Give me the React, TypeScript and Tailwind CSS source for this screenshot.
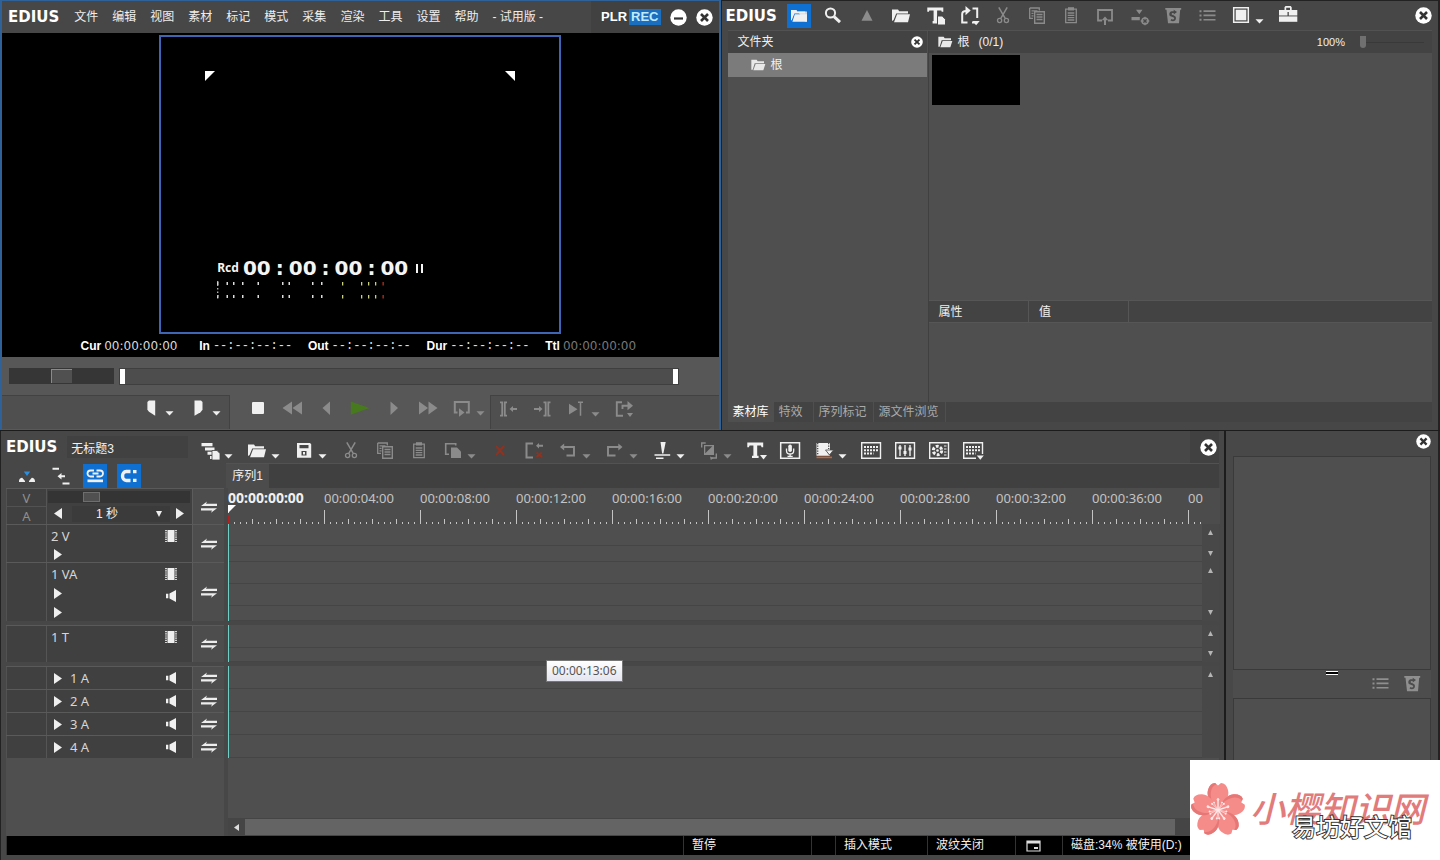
import React from "react";
import type { ReactNode } from "react";

type IconProps = { children: ReactNode; className?: string };

function Icon({ children, className = "" }: IconProps) {
  return (
    <svg viewBox="0 0 24 24" width="24" height="24" fill="currentColor" aria-hidden="true" className={`shrink-0 ${className}`}>
      {children}
    </svg>
  );
}

const line = { fill: "none", stroke: "currentColor" };

const icons = {
  folder: (
    <Icon>
      <path d="M3 5.5h6l1.2 1.8H19v2.2H7.2L4.6 16 3 17z" />
      <path d="M8 10.3h13l-2 7.9H5z" />
    </Icon>
  ),
  folderActive: (
    <Icon>
      <path d="M4 6h5.4l1.2 1.6h7.6v2H7.4L4.8 16 4 16.5z" />
      <path d="M7.8 10.2H20v7.6H5.4z" />
      <path d="M10.8 7.6H20v10H18z" opacity="0.8" />
    </Icon>
  ),
  search: (
    <Icon>
      <circle cx="9.5" cy="9" r="4.6" {...line} strokeWidth="2" />
      <path d="M13 12.6l6 5.6" {...line} strokeWidth="3" />
    </Icon>
  ),
  up: <Icon><path d="M12 6l5.5 10.7h-11z" /></Icon>,
  titleDoc: (
    <Icon>
      <path d="M4.3 3.6h16v4.2h-1.600l-.4-1.400h-4.200V17h1v2.500H9.600V17h1V6.400H6.300l-.4 1.400H4.300z" />
      <path d="M14.5 12h4.7l3.3 3.3V21h-8z" stroke="#484848" strokeWidth="1" />
    </Icon>
  ),
  loopSeq: (
    <Icon>
      <path d="M10.5 18.5H5.2V12M5.2 14V10c0-2 1.5-3 4-3M15.5 4.5h4.7V14M20.2 18.5H15" {...line} strokeWidth="2" />
      <path d="M8.5 2l5.2 4.6-5.2 4.6zM15.5 17h7.2l-3.6 4.3z" />
    </Icon>
  ),
  cut: (
    <Icon>
      <path d="M7.8 3.3l6.4 11M16.2 3.3l-6.4 11" {...line} strokeWidth="1.5" />
      <circle cx="8.600" cy="16.5" r="2.1" {...line} strokeWidth="1.3" />
      <circle cx="15.4" cy="16.5" r="2.1" {...line} strokeWidth="1.3" />
    </Icon>
  ),
  copy: (
    <Icon>
      <path d="M4.7 4h9.600v2.5M8 14.3H4.700V4M6.500 6.800h6M6.500 9.300h2M6.500 11.800h2" {...line} strokeWidth="1.3" />
      <path d="M9.700 7.700h9.600v11.600H9.700zM11.500 10.500h6M11.500 13h6M11.500 15.500h6" {...line} strokeWidth="1.4" />
    </Icon>
  ),
  paste: (
    <Icon>
      <path d="M6.700 5.200h10.600v13.500H6.700zM8.700 9h6.600M8.700 11.300h6.600M8.700 13.600h6.600M8.700 16h6.600" {...line} strokeWidth="1.3" />
      <path d="M9 3.200h6v3.300H9z" />
    </Icon>
  ),
  toMonitor: (
    <Icon>
      <path d="M9 16.500H5V6h14v10.500h-4" {...line} strokeWidth="1.8" />
      <path d="M12 12.500l3.300 3.800h-2.300V21h-2v-4.700H8.700z" />
    </Icon>
  ),
  addLine: (
    <Icon>
      <path d="M9 5.800h6.500l-3.200 4.400zM4.500 13h8.300v3.200H4.500z" />
      <circle cx="18" cy="17" r="3" {...line} strokeWidth="1.5" />
      <path d="M18 12.700v3M18 18.300v3M13.700 17h3M19.300 17h3" {...line} strokeWidth="1.3" />
    </Icon>
  ),
  recycle: (
    <Icon>
      <path fillRule="evenodd" d="M4.300 4h15.900v1.700h-1L18 19.200H7L5.500 5.700H4.300zM9.800 7.500c-1.500.6-2 3.300-.9 4.600l3.800 1.500c.8.500.6 2-.6 2-1 0-1.500-.6-1.500-.6l-1.200 1.300c2.300 2 6.200.6 5.500-2.800-.3-1.500-1.500-2-3.800-2.800-.8-.4-.6-1.700.6-1.700h1v1.500l3.300-2.500-3.300-2.300v1.500c-.9-.1-2.100-.1-2.900.3z" />
    </Icon>
  ),
  list: (
    <Icon>
      <path d="M4.500 6.200h2v2h-2zM4.500 10.500h2v2h-2zM4.500 14.800h2v2h-2zM8.500 6.300h12v1.700h-12zM8.500 10.600h12v1.700h-12zM8.500 14.900h12v1.700h-12z" />
    </Icon>
  ),
  square: (
    <Icon>
      <path d="M4.700 3.700h14.600v14.600H4.700z" {...line} strokeWidth="1.5" />
      <path d="M6.700 5.700h10.600v10.600H6.700z" />
    </Icon>
  ),
  briefcase: (
    <Icon>
      <path fillRule="evenodd" d="M3 6h5.500V3.200L9.500 2h5.200l1 1.200V6h5.600v5.500H3zM10.200 3.700V6h3.800V3.700z" />
      <path d="M3 12.400h18.300v5.400H3z" />
      <path d="M11.500 8h1.300v4h-1.300z" fill="#474747" />
    </Icon>
  ),
  layers: (
    <Icon>
      <path d="M3.500 4h11v3.300h-11zM7 8.500h9.500v3H7zM9.500 12.800h5v3h-5zM12 17h2v3h-2z" />
      <path d="M14 11.500h5l3 3V21h-8z" stroke="#474747" strokeWidth="0.8" />
    </Icon>
  ),
  save: (
    <Icon>
      <path fillRule="evenodd" d="M5 4h13l1.200 1.200v13.500H5zM7.500 6v3.200h9V6zM9.500 12v4.500h5V12z" />
      <path d="M11 13h2v2.500h-2z" />
    </Icon>
  ),
  pasteTo: (
    <Icon>
      <path d="M8 15.300H4.700V4.700h10V6.500" {...line} strokeWidth="1.6" />
      <path d="M10 8.500h6l4 4V19H10z" />
    </Icon>
  ),
  remove: <Icon className="text-[#90321f]"><path d="M8 7l8 9M16 7l-8 9" {...line} strokeWidth="2" /></Icon>,
  rippleDelete: (
    <Icon>
      <path d="M11 4.500H4.500v14H11M15.500 6.800h5.500" {...line} strokeWidth="2" />
      <path d="M14 6.800l3-2.800v5.600z" />
      <path d="M14.500 13.500l5.500 4.500M20 13.500l-5.500 4.500" stroke="#90321f" strokeWidth="2" />
    </Icon>
  ),
  undo: (
    <Icon>
      <path d="M7 8h11v8.500h-7.500" {...line} strokeWidth="1.9" />
      <path d="M4 8l4.200-3.500v7z" />
    </Icon>
  ),
  redo: (
    <Icon>
      <path d="M16 8H5v8.500h7.500" {...line} strokeWidth="1.9" />
      <path d="M19.500 8l-4.200-3.500v7z" />
    </Icon>
  ),
  razor: (
    <Icon>
      <path d="M10.500 3h5.200l-2.300 11.500h-1.300zM4.500 15.300h15.700v1.500H4.500zM6 18.600h7.500V20H6z" />
    </Icon>
  ),
  transition: (
    <Icon>
      <path fillRule="evenodd" d="M7 6h10v10H7zM8.300 7.300v7l7-7z" />
      <path d="M4.700 8.500V4h4M19.300 14.500v4.500h-4.500" {...line} strokeWidth="1.4" />
      <path d="M13 17.500l3.800 1.500-3 2z" />
    </Icon>
  ),
  title: (
    <Icon>
      <path d="M3.300 3.600h15.900v4.600h-1.600l-.7-1.600h-3.700v10.100h1.400v2.200H8v-2.200h1.400V6.600H5.600l-.7 1.600H3.300z" />
      <path d="M16 16h7l-3.500 4.500z" />
    </Icon>
  ),
  mic: (
    <Icon>
      <path d="M2.700 3.700h18.800v15.600H2.700z" {...line} strokeWidth="1.5" />
      <rect x="10.3" y="5.5" width="3.6" height="7.5" rx="1.8" />
      <path d="M8.500 9.500v2.200c0 4.300 7.200 4.300 7.200 0V9.500M12.100 15v2.500M9.500 17.300h5.200" {...line} strokeWidth="1.3" />
    </Icon>
  ),
  render: (
    <Icon>
      <path d="M4.500 4h13.500v9H15l3 3.700H4.500z" />
      <path d="M5.700 4v12.500M16.700 4v6" stroke="#474747" strokeWidth="1.3" strokeDasharray="1.3 1.2" />
      <path d="M13.500 11h8l-4 5z" stroke="#474747" strokeWidth="0.8" />
      <path d="M4.500 17.600h15.500v1.600H4.500z" fill="#d0602d" />
    </Icon>
  ),
  keypad: (
    <Icon>
      <path d="M2.700 3.700h18.800v15.600H2.700z" {...line} strokeWidth="1.4" />
      <path d="M5 8h14M5 11.300h14M5 14.600h9.500" {...line} strokeWidth="2" strokeDasharray="2 1" />
    </Icon>
  ),
  mixer: (
    <Icon>
      <path d="M2.700 3.700h18.800v15.600H2.700zM7 6v11M12 6v11M17 6v11" {...line} strokeWidth="1.4" />
      <path d="M5.500 7.500h3v3h-3zM10.500 12h3v3h-3zM15.500 8.500h3v3h-3z" />
    </Icon>
  ),
  scope: (
    <Icon>
      <path d="M2.700 3.700h18.800v15.600H2.700z" {...line} strokeWidth="1.4" />
      <circle cx="10.5" cy="11.5" r="4.2" {...line} strokeWidth="3" strokeDasharray="2.8 1.6" />
      <circle cx="10.5" cy="11.5" r="1.3" />
      <path d="M17 7h2.500M17 10h2.500M17 13h2.500M17 16h2.500" {...line} strokeWidth="1.2" />
    </Icon>
  ),
  keypadMenu: (
    <Icon>
      <path d="M15 19.300H2.700V3.700h18.800V15" {...line} strokeWidth="1.4" />
      <path d="M5 8h14M5 11.300h14M5 14.600h9.500" {...line} strokeWidth="2" strokeDasharray="2 1" />
      <path d="M15.800 16.500h7l-3.500 4.200z" />
    </Icon>
  ),
  markIn: <Icon><path d="M10 4.500h6.200v15.200l-6.200-4-1.600-2V6z" /></Icon>,
  markOut: <Icon><path d="M8.500 4.500H15L16.500 6v7.700l-2 2.500-6 3.500z" /></Icon>,
  stop: <Icon><rect x="6" y="6" width="12" height="12" rx="1" /></Icon>,
  rewind: <Icon><path d="M12 5.500v13L2.500 12zM22 5.500v13L12.500 12z" /></Icon>,
  prev: <Icon><path d="M16 5.500v13.500L8.500 12z" /></Icon>,
  play: <Icon className="text-[#467a1c]"><path d="M2.800 5.500L21.500 12 2.800 18.800z" /></Icon>,
  next: <Icon><path d="M8.500 5.500v13.500L16 12z" /></Icon>,
  forward: <Icon><path d="M3 5.500v13l9-6.500zM12.500 5.500v13l9-6.500z" /></Icon>,
  loop: (
    <Icon>
      <path d="M7.500 16.500H4.800V6h14v10.500H16" {...line} strokeWidth="2" />
      <path d="M9 12.300l5.500 4.200L9 20.800z" />
    </Icon>
  ),
  gotoIn: (
    <Icon>
      <path d="M3 5.300h2.200v13.400H3M10 5.300H7.800v13.400H10M15 12h5" {...line} strokeWidth="1.8" />
      <path d="M12.500 12l3.500-3v6z" />
    </Icon>
  ),
  gotoOut: (
    <Icon>
      <path d="M12.500 5.300h2.200v13.400h-2.200M19.500 5.300h-2.200v13.400h2.200M3 12h6" {...line} strokeWidth="1.8" />
      <path d="M11.500 12L8 9v6z" />
    </Icon>
  ),
  playAround: (
    <Icon>
      <path d="M4 6.800l8.500 5.400L4 17.600z" />
      <path d="M13 5.300h5M15.500 5.300v13.400" {...line} strokeWidth="1.5" />
    </Icon>
  ),
  exportOut: (
    <Icon>
      <path d="M10 5.300H4.800v13.400H11M10.500 12V8.800H17" {...line} strokeWidth="1.9" />
      <path d="M15.500 4l5.500 4.700-5.500 4.500zM15 16h6l-3 4z" />
    </Icon>
  ),
  ripple: (
    <Icon>
      <path d="M8.800 7.500h6.400L12 12z" className="text-[#2b8fe0]" />
      <path d="M4 17.500c0-3 2-3.800 3.200-3.800L10 17v1H4zM14 18v-1l2.800-3.300c1.200 0 3.200.8 3.200 3.800v.5z" />
    </Icon>
  ),
  insertMode: (
    <Icon>
      <path d="M3.500 4.800h6.500M13.500 19.500h7M11 12.300h5" {...line} strokeWidth="2" />
      <path d="M8.500 12.300l4-3.300v6.600z" />
    </Icon>
  ),
  link: (
    <Icon>
      <path d="M11 6.500H7.500a2 2 0 000 6H11M13.500 6.500H17a2 2 0 010 6h-3.500M9.500 9.500h6" {...line} strokeWidth="1.8" />
      <path d="M4.500 15.500h15.500v2.700H4.500z" />
    </Icon>
  ),
  snap: (
    <Icon>
      <path d="M13.500 7.500H9.300c-5 0-5 9 0 9h4.200" {...line} strokeWidth="3.4" />
      <path d="M16 6h3.500v3.300H16zM16 14.700h3.500V18H16z" />
    </Icon>
  ),
};

const Caret = ({ bright }: { bright?: boolean }) => (
  <svg viewBox="0 0 13 24" width="13" height="24" aria-hidden="true" className={bright ? "text-[#f0f0f0]" : "text-[#8b8b8b]"}>
    <path d="M2.5 15.200h8L6.500 19.500z" fill="currentColor" />
  </svg>
);

type Tool = { icon: keyof typeof icons; label: string; off?: boolean; menu?: boolean; active?: boolean };

function ToolButton({ icon, label, off, menu, active }: Tool) {
  return (
    <div className="flex shrink-0">
      <button
        aria-label={label}
        className={`size-6 ${active ? "bg-[#0f70d2]" : ""} ${off ? "text-[#8b8b8b]" : "text-[#f0f0f0]"}`}
      >
        {icons[icon]}
      </button>
      {menu && (
        <button aria-label={`${label}菜单`}>
          <Caret bright={!off} />
        </button>
      )}
    </div>
  );
}

function Toolbar({ tools }: { tools: Tool[] }) {
  return (
    <div className="flex items-center gap-2.5">
      {tools.map((t) => (
        <ToolButton key={t.label} {...t} />
      ))}
    </div>
  );
}

function CloseButton({ small }: { small?: boolean }) {
  const s = small ? 12 : 17;
  return (
    <button aria-label="关闭" className="shrink-0">
      <svg viewBox="0 0 17 17" width={s} height={s} aria-hidden="true" className="block">
        <circle cx="8.5" cy="8.5" r="8.2" fill="#fff" />
        <path d="M5 5l7 7M12 5l-7 7" stroke="#333" strokeWidth="2.6" />
      </svg>
    </button>
  );
}

const Logo = () => <span className="font-[DejaVu_Sans] text-[15px] leading-4 font-bold text-white">EDIUS</span>;

/* ---------- Player / recorder ---------- */

const menus = ["文件", "编辑", "视图", "素材", "标记", "模式", "采集", "渲染", "工具", "设置", "帮助"];

const readouts: [string, string, string][] = [
  ["Cur", "00:00:00:00", "text-[#d8d8d8]"],
  ["In", "--:--:--:--", "text-[#e0e0e0]"],
  ["Out", "--:--:--:--", "text-[#e0e0e0]"],
  ["Dur", "--:--:--:--", "text-[#e0e0e0]"],
  ["Ttl", "00:00:00:00", "text-[#777]"],
];

function LevelMeter() {
  const white = [0, 9.5, 16, 25, 40.5, 65, 71.5, 95, 104];
  const yellow = [125, 144, 151, 158];
  return (
    <svg width="170" height="20" viewBox="0 0 170 20" aria-hidden="true">
      {[2, 15].map((y) => (
        <g key={y}>
          {white.map((x) => (
            <rect key={x} x={x} y={y} width="1.5" height="3" fill="#ddd" />
          ))}
          {yellow.map((x) => (
            <rect key={x} x={x} y={y} width="1.3" height="3.5" fill="#c9cf7a" />
          ))}
          <rect x="165.5" y={y} width="1.3" height="3.5" fill="#b5301c" />
        </g>
      ))}
      <path d="M.7 1v18" stroke="#bbb" strokeWidth="1.3" strokeDasharray="1.5 2" />
    </svg>
  );
}

function Player() {
  return (
    <section className="flex flex-1 flex-col border-x-2 border-y border-[#2f6299] bg-[#575757]">
      <header className="flex h-8 items-center bg-[#474747] pl-1.5">
        <Logo />
        <nav className="ml-[15px] flex flex-1 gap-3.5 text-xs whitespace-nowrap text-[#eee]">
          {menus.map((m) => (
            <button key={m}>{m}</button>
          ))}
          <span>- 试用版 -</span>
        </nav>
        <div className="flex h-full items-center gap-[9px] bg-[#414141] pr-1.5 pl-2.5">
          <div className="flex gap-0.5 font-[Liberation_Sans] text-[13px] leading-4 font-bold">
            <button className="text-white">PLR</button>
            <button className="bg-[#1a6fc0] px-0.5 text-[#bfeaff]">REC</button>
          </div>
          <button aria-label="最小化">
            <svg viewBox="0 0 17 17" width="17" height="17" aria-hidden="true" className="block">
              <circle cx="8.5" cy="8.5" r="8.2" fill="#fff" />
              <path d="M4 9.500h9" stroke="#333" strokeWidth="2.2" />
            </svg>
          </button>
          <CloseButton />
        </div>
      </header>

      <div className="flex h-[324px] flex-col items-center bg-black pt-0.5">
        <div className="flex h-[299px] w-[402px] shrink-0 flex-col border-2 border-[#3f66b5]">
          <div className="flex justify-between px-11 pt-[34px] text-white">
            <svg width="10" height="10" aria-hidden="true"><path d="M0 0h10L0 10z" fill="currentColor" /></svg>
            <svg width="10" height="10" aria-hidden="true"><path d="M0 0h10v10z" fill="currentColor" /></svg>
          </div>
          <div className="mt-auto mb-8 pl-14">
            <div className="flex items-center text-[#f4f4f4]">
              <span className="mr-1 font-[Noto_Sans] text-xs leading-6 font-bold">Rcd</span>
              <span className="flex gap-[5px] font-[DejaVu_Sans] text-xl leading-6 font-bold">
                <span>00</span><span>:</span><span>00</span><span>:</span><span>00</span><span>:</span><span>00</span>
              </span>
              <svg width="7" height="9" aria-hidden="true" className="ml-2">
                <path d="M0 0h2v9H0zM5 0H7v9H5z" fill="currentColor" />
              </svg>
            </div>
            <LevelMeter />
          </div>
        </div>
        <div className="mt-1 flex gap-[18px] text-xs leading-4">
          {readouts.map(([k, v, tone]) => (
            <div key={k} className="flex gap-[3px]">
              <span className="font-[Liberation_Sans] font-bold text-white">{k}</span>
              <span
                className={`w-[77px] whitespace-nowrap ${tone} ${v.startsWith("-") ? "font-[Liberation_Mono]" : "font-[DejaVu_Sans]"}`}
              >
                {v}
              </span>
            </div>
          ))}
        </div>
      </div>

      <div className="flex h-[38px] items-center pr-10 pl-[7px]">
        <input
          type="range"
          aria-label="穿梭"
          defaultValue={50}
          className="h-4 w-[105px] appearance-none bg-[#363636] [&::-webkit-slider-thumb]:h-3.5 [&::-webkit-slider-thumb]:w-[21px] [&::-webkit-slider-thumb]:appearance-none [&::-webkit-slider-thumb]:border-t [&::-webkit-slider-thumb]:border-l [&::-webkit-slider-thumb]:border-[#8a8a8a] [&::-webkit-slider-thumb]:bg-[#505050]"
        />
        <div className="ml-[5px] flex h-[17px] flex-1 border border-[#3f3f3f] bg-[#4d4d4d]">
          <input
            type="range"
            aria-label="播放位置"
            defaultValue={0}
            className="h-full min-w-0 flex-1 appearance-none bg-transparent [&::-webkit-slider-thumb]:h-[15px] [&::-webkit-slider-thumb]:w-[5px] [&::-webkit-slider-thumb]:appearance-none [&::-webkit-slider-thumb]:bg-white"
          />
          <span className="w-[5px] bg-white" />
        </div>
      </div>

      <div className="flex min-h-[34px] flex-1">
        <div className="flex w-[228px] items-start justify-end border-t border-r border-[#424242] bg-[#4f4f4f] pr-1.5">
          <Toolbar
            tools={[
              { icon: "markIn", label: "设置入点", menu: true },
              { icon: "markOut", label: "设置出点", menu: true },
            ]}
          />
        </div>
        <div className="flex w-[260px] items-start pt-px pl-4">
          <Toolbar
            tools={[
              { icon: "stop", label: "停止" },
              { icon: "rewind", label: "快退", off: true },
              { icon: "prev", label: "上一帧", off: true },
              { icon: "play", label: "播放" },
              { icon: "next", label: "下一帧", off: true },
              { icon: "forward", label: "快进", off: true },
              { icon: "loop", label: "循环播放", off: true, menu: true },
            ]}
          />
        </div>
        <div className="flex flex-1 items-start border-t border-l border-[#424242] bg-[#4f4f4f] pt-px pl-1.5">
          <Toolbar
            tools={[
              { icon: "gotoIn", label: "移到入点", off: true },
              { icon: "gotoOut", label: "移到出点", off: true },
              { icon: "playAround", label: "播放指针区域", off: true, menu: true },
              { icon: "exportOut", label: "输出", off: true },
            ]}
          />
        </div>
      </div>
    </section>
  );
}

/* ---------- Bin ---------- */

const SmallFolder = () => (
  <svg viewBox="0 0 24 24" width="16" height="16" aria-hidden="true" className="text-[#e8e8e8]">
    <path d="M2 4h8l1.500 2.500H21v3H7L4 19H2zM8.500 10.500H23L20 20H5z" fill="currentColor" />
  </svg>
);

const binTabs = ["素材库", "特效", "序列标记", "源文件浏览"];

function Bin() {
  return (
    <section className="flex flex-1 flex-col border-t border-r-2 border-l border-[#222] bg-[#474747]">
      <header className="flex h-[29px] items-center pr-1.5 pl-1">
        <div className="w-[61px]"><Logo /></div>
        <Toolbar
          tools={[
            { icon: "folderActive", label: "文件夹视图", active: true },
            { icon: "search", label: "搜索" },
            { icon: "up", label: "上一级", off: true },
            { icon: "folder", label: "添加文件" },
            { icon: "titleDoc", label: "新建字幕" },
            { icon: "loopSeq", label: "新建序列" },
            { icon: "cut", label: "剪切", off: true },
            { icon: "copy", label: "复制", off: true },
            { icon: "paste", label: "粘贴", off: true },
            { icon: "toMonitor", label: "在播放窗口显示", off: true },
            { icon: "addLine", label: "添加到时间线", off: true },
            { icon: "recycle", label: "删除", off: true },
            { icon: "list", label: "列表视图", off: true },
            { icon: "square", label: "显示方式", menu: true },
            { icon: "briefcase", label: "工具" },
          ]}
        />
        <div className="ml-auto flex"><CloseButton /></div>
      </header>

      <div className="mx-1.5 flex flex-1 border-t border-[#525252] text-xs text-[#f0f0f0]">
        <div className="flex w-[201px] flex-col border-r border-[#404040] bg-[#4f4f4f] pr-px">
          <div className="flex h-[22px] items-center justify-between bg-[#434343] pr-1 pl-2.5">
            <span>文件夹</span>
            <CloseButton small />
          </div>
          <button className="flex h-6 items-center gap-[5px] bg-[#7b7b7b] pl-[22px]">
            <SmallFolder />
            根
          </button>
        </div>
        <div className="flex flex-1 flex-col bg-[#4f4f4f]">
          <div className="flex h-[22px] items-center gap-[5px] bg-[#434343] px-2">
            <SmallFolder />
            <span>根</span>
            <span className="pl-1">(0/1)</span>
            <span className="ml-auto text-[11px]">100%</span>
            <input
              type="range"
              aria-label="缩略图大小"
              defaultValue={0}
              className="ml-2.5 h-4 w-16 appearance-none bg-[linear-gradient(#393939,#393939)] bg-[length:100%_1px] bg-center bg-no-repeat [&::-webkit-slider-thumb]:h-3 [&::-webkit-slider-thumb]:w-1.5 [&::-webkit-slider-thumb]:appearance-none [&::-webkit-slider-thumb]:rounded-b-full [&::-webkit-slider-thumb]:bg-[#707070]"
            />
          </div>
          <div className="h-[247px] pt-0.5 pl-[3px]">
            <div className="h-[50px] w-[88px] bg-black" />
          </div>
          <table className="w-full border-collapse text-left">
            <thead>
              <tr className="h-[22px] border-y border-[#565656] bg-[#434343]">
                <th className="w-[100px] border-r border-[#565656] pl-2.5 font-normal">属性</th>
                <th className="w-[100px] border-r border-[#565656] pl-2.5 font-normal">值</th>
                <th aria-label="备注" />
              </tr>
            </thead>
          </table>
        </div>
      </div>

      <div className="mx-1.5 mb-2 flex h-[20px] bg-[#434343] text-xs text-[#aaa]">
        {binTabs.map((t, i) => (
          <button
            key={t}
            className={i === 0 ? "w-[46px] bg-[#4f4f4f] text-white" : "min-w-10 border-r border-[#4f4f4f] pr-1.5 pl-[5px] text-left"}
          >
            {t}
          </button>
        ))}
      </div>
    </section>
  );
}

/* ---------- Timeline ---------- */

const labels = ["04", "08", "12", "16", "20", "24", "28", "32", "36"].map((s) => `00:00:${s}:00`);

const Ticks = () => (
  <svg width="100%" height="15" aria-hidden="true" className="block">
    <defs>
      <pattern id="ruler" width="96" height="15" patternUnits="userSpaceOnUse">
        {Array.from({ length: 16 }, (_, i) => {
          const h = i === 0 ? 14 : i % 4 === 0 ? 5 : 2;
          return <rect key={i} x={i * 6} y={15 - h} width="1" height={h} fill="#c4c4c4" />;
        })}
      </pattern>
    </defs>
    <rect width="100%" height="15" fill="url(#ruler)" />
  </svg>
);

const Sync = () => (
  <button aria-label="同步锁定" className="flex w-8 shrink-0 items-center justify-center border-l border-[#5c5c5c] bg-[#4d4d4d]">
    <svg width="18" height="14" viewBox="0 0 18 14" aria-hidden="true">
      <path d="M1 6L7 1.500l-1 2.300H17V6zM17 8.300l-6 4.500 1-2.300H1V8.300z" fill="#ededed" />
    </svg>
  </button>
);

const Right = () => (
  <svg width="8" height="11" aria-hidden="true"><path d="M0 0l8 5.500L0 11z" fill="#efefef" /></svg>
);
const Left = () => (
  <svg width="8" height="11" aria-hidden="true"><path d="M8 0L0 5.500 8 11z" fill="#efefef" /></svg>
);
const Film = () => (
  <svg width="12" height="12" aria-hidden="true">
    <path d="M2.500 0h7v12h-7z" fill="#f0f0f0" />
    <path d="M1 0v12M11 0v12" stroke="#d0d0d0" strokeWidth="2" strokeDasharray="1.2 1" />
  </svg>
);
const Speaker = () => (
  <svg width="12" height="12" aria-hidden="true">
    <path d="M11 0v12L4.500 8.500v-5zM1 3.800h2.300v4.500H1z" fill="#f0f0f0" />
  </svg>
);

const Mini = ({ down }: { down?: boolean }) => (
  <svg width="5" height="5" aria-hidden="true">
    <path d={down ? "M0 0h5L2.500 5z" : "M0 5h5L2.500 0z"} fill="#b5b5b5" />
  </svg>
);

type Track = { name: string; kind: "video" | "va" | "title" | "audio"; height: string; lanes: string[]; arrows: number; gap?: boolean };

const tracks: Track[] = [
  { name: "2 V", kind: "video", height: "h-[38px]", lanes: ["h-[22px]", "flex-1"], arrows: 2 },
  { name: "1 VA", kind: "va", height: "h-[59px]", lanes: ["h-[22px]", "h-[22px]", "flex-1"], arrows: 2, gap: true },
  { name: "1 T", kind: "title", height: "h-[37px]", lanes: ["h-[23px]", "flex-1"], arrows: 2, gap: true },
  { name: "1 A", kind: "audio", height: "h-[23px]", lanes: ["flex-1"], arrows: 1 },
  { name: "2 A", kind: "audio", height: "h-[23px]", lanes: ["flex-1"], arrows: 0 },
  { name: "3 A", kind: "audio", height: "h-[23px]", lanes: ["flex-1"], arrows: 0 },
  { name: "4 A", kind: "audio", height: "h-[23px]", lanes: ["flex-1"], arrows: 0 },
];

function TrackHead({ track }: { track: Track }) {
  const name = <span className="font-[Noto_Sans] text-[13px] leading-4 text-[#d6d6d6]">{track.name}</span>;
  if (track.kind === "audio") {
    return (
      <div className="flex w-[146px] items-center border-l border-[#555] pr-[15px] pl-[7px]">
        <button aria-label="展开"><Right /></button>
        <span className="ml-2 flex-1">{name}</span>
        <button aria-label="静音"><Speaker /></button>
      </div>
    );
  }
  return (
    <div className="flex w-[146px] justify-between border-l border-[#555] pt-[3px] pr-[15px] pl-1">
      <div className="flex flex-col">
        {name}
        {track.kind !== "title" && (
          <div className={`flex flex-col gap-2 pl-[3px] ${track.kind === "va" ? "pt-1.5" : "pt-[5px]"}`}>
            <button aria-label="展开" className="h-[11px] [&>svg]:block"><Right /></button>
            {track.kind === "va" && <button aria-label="展开音频" className="h-[11px] [&>svg]:block"><Right /></button>}
          </div>
        )}
      </div>
      <div className="flex flex-col gap-2.5 pt-0.5">
        <button aria-label="视频静音" className="[&>svg]:block"><Film /></button>
        {track.kind === "va" && <button aria-label="音频静音" className="[&>svg]:block"><Speaker /></button>}
      </div>
    </div>
  );
}

function TrackRow({ track }: { track: Track }) {
  return (
    <div className={`flex ${track.height} ${track.gap ? "mb-1" : ""}`}>
      <div className="flex shrink-0 border-t border-[#5a5a5a] bg-[#404040]">
        <div className="w-10 border-l border-[#525252]" />
        <TrackHead track={track} />
        <Sync />
      </div>
      <div className="ml-1 flex flex-1 flex-col border-l border-[#6fcfc6] bg-[#4f4f4f]">
        {track.lanes.map((h, i) => (
          <div key={i} className={`${h} border-b border-[#454545]`} />
        ))}
      </div>
      <div className="flex w-[17px] flex-col items-center justify-between bg-[#484848] py-1.5">
        {track.arrows > 0 && <Mini />}
        {track.arrows > 1 && <Mini down />}
      </div>
    </div>
  );
}

function Timeline() {
  return (
    <section className="flex min-w-0 flex-1 flex-col border-l border-[#222] bg-[#474747] px-[5px] pb-[5px]">
      <header className="flex h-8 items-center">
        <div className="flex w-48 shrink-0 items-center gap-2.5">
          <Logo />
          <input
            aria-label="工程名称"
            defaultValue="无标题3"
            className="mr-2.5 h-[22px] min-w-0 flex-1 bg-[#414141] pl-1 text-xs text-[#f0f0f0]"
          />
        </div>
        <div className="pt-2">
          <Toolbar
            tools={[
              { icon: "layers", label: "新建", menu: true },
              { icon: "folder", label: "打开", menu: true },
              { icon: "save", label: "保存", menu: true },
              { icon: "cut", label: "剪切", off: true },
              { icon: "copy", label: "复制", off: true },
              { icon: "paste", label: "粘贴", off: true },
              { icon: "pasteTo", label: "替换", off: true, menu: true },
              { icon: "remove", label: "删除", off: true },
              { icon: "rippleDelete", label: "波纹删除", off: true },
              { icon: "undo", label: "撤销", off: true, menu: true },
              { icon: "redo", label: "恢复", off: true, menu: true },
              { icon: "razor", label: "添加剪切点", menu: true },
              { icon: "transition", label: "添加转场", off: true, menu: true },
              { icon: "title", label: "添加字幕" },
              { icon: "mic", label: "同步录音" },
              { icon: "render", label: "渲染", menu: true },
              { icon: "keypad", label: "多机位模式" },
              { icon: "mixer", label: "调音台" },
              { icon: "scope", label: "矢量图" },
              { icon: "keypadMenu", label: "面板显示" },
            ]}
          />
        </div>
        <div className="ml-auto flex h-full items-center bg-[#414141] pr-0.5 pl-2.5"><CloseButton /></div>
      </header>

      <div className="flex h-[25px]">
        <div className="flex w-[220px] shrink-0 pl-[9px]">
          <Toolbar
            tools={[
              { icon: "ripple", label: "波纹模式" },
              { icon: "insertMode", label: "插入模式" },
              { icon: "link", label: "链接模式", active: true },
              { icon: "snap", label: "吸附", active: true },
            ]}
          />
        </div>
        <div className="flex flex-1 border-t border-[#525252] bg-[#404040]">
          <button className="w-[43px] bg-[#4c4c4c] text-xs text-[#f0f0f0]">序列1</button>
        </div>
      </div>

      <div className="flex h-9 shrink-0">
        <div className="flex border-t border-[#5a5a5a] bg-[#404040]">
          <div className="flex w-10 flex-col border-l border-[#525252] text-center font-[Noto_Sans] text-[13px] leading-4 text-[#8f8f8f]">
            <button className="flex-1 border-b border-[#525252]">V</button>
            <button className="flex-1">A</button>
          </div>
          <div className="flex w-[146px] flex-col border-l border-[#555] pt-0.5 pr-0.5 pl-px">
            <input
              type="range"
              aria-label="时间线缩放"
              defaultValue={28}
              className="h-3 w-full appearance-none bg-[#343434] [&::-webkit-slider-thumb]:h-2.5 [&::-webkit-slider-thumb]:w-[17px] [&::-webkit-slider-thumb]:appearance-none [&::-webkit-slider-thumb]:border [&::-webkit-slider-thumb]:border-[#6e6e6e] [&::-webkit-slider-thumb]:bg-[#505050]"
            />
            <div className="flex flex-1 items-center gap-1.5 px-1.5">
              <button aria-label="缩小"><Left /></button>
              <div className="relative ml-1 flex flex-1 items-center">
                <select
                  aria-label="时间线比例"
                  defaultValue="1"
                  className="h-4 w-full appearance-none bg-[#3b3b3b] pl-6 text-xs leading-4 text-[#f0f0f0]"
                >
                  <option value="1">1 秒</option>
                  <option value="5">5 秒</option>
                </select>
                <svg width="6" height="6" aria-hidden="true" className="pointer-events-none absolute right-2">
                  <path d="M0 0h6L3 6z" fill="#eee" />
                </svg>
              </div>
              <button aria-label="放大"><Right /></button>
            </div>
          </div>
          <Sync />
        </div>
        <div className="relative ml-1 flex-1 bg-[#4c4c4c] pr-[17px]">
          <div className="flex h-[21px] font-[Noto_Sans] text-[13px] leading-5 whitespace-nowrap text-[#c4c4c4]">
            <span className="w-24 shrink-0 text-sm leading-5 font-bold text-[#f0f0f0]">00:00:00:00</span>
            {labels.map((l) => (
              <span key={l} className="w-24 shrink-0">{l}</span>
            ))}
            <span>00</span>
          </div>
          <Ticks />
          <svg width="8" height="19" aria-hidden="true" className="absolute bottom-0 left-0">
            <path d="M0 0h8L0 8z" fill="#fff" />
            <path d="M0 8h1v11H0z" fill="#4c4c4c" />
            <path d="M0 11h1.500v7H0z" fill="#b02020" />
          </svg>
        </div>
      </div>

      <div className="relative flex flex-1 flex-col">
        {tracks.map((t) => (
          <TrackRow key={t.name} track={t} />
        ))}
        <div className="flex flex-1">
          <div className="w-[218px] bg-[#4f4f4f]" />
          <div className="ml-1 flex-1 bg-[#4f4f4f]" />
        </div>
        <div className="flex h-[18px]">
          <div className="w-[218px] bg-[#4f4f4f]" />
          <div className="ml-1 flex flex-1 items-center bg-[#454545]">
            <button aria-label="向左滚动" className="flex w-[17px] justify-center">
              <svg width="5" height="7" aria-hidden="true"><path d="M5 0v7L0 3.500z" fill="#ddd" /></svg>
            </button>
            <div className="mr-11 h-4 flex-1 bg-[#646464]" />
          </div>
        </div>
        <div className="absolute top-[136px] left-[540px] border border-[#767676] bg-linear-to-b from-white to-[#e3e4ef] px-[5px] font-[Noto_Sans] text-xs leading-5 text-[#555]">
          00:00:13:06
        </div>
      </div>

      <footer className="flex h-[19px] items-stretch bg-black text-xs leading-[18px] text-[#f0f0f0] [&>*]:border-l [&>*]:border-[#333] [&>*]:pl-2">
        <span className="flex-1" />
        <span className="w-32">暂停</span>
        <span className="w-6" />
        <span className="w-[92px]">插入模式</span>
        <span className="w-[88px]">波纹关闭</span>
        <span className="flex w-[47px] items-center">
          <svg width="16" height="12" viewBox="0 0 16 12" aria-hidden="true" className="ml-0.5">
            <path d="M1 1h13v10H1z" fill="none" stroke="#ddd" strokeWidth="1.2" />
            <path d="M1 1h13v2.500H1zM8 7h4v2H8z" fill="#ddd" />
          </svg>
        </span>
        <span className="w-[157px]">磁盘:34% 被使用(D:)</span>
      </footer>
    </section>
  );
}

function InfoPanel() {
  return (
    <aside className="flex w-[214px] shrink-0 flex-col border-r-2 border-[#222] bg-[#484848] px-[7px]">
      <header className="flex h-[25px] items-center justify-end pb-1 [&_svg]:size-[15px]"><CloseButton /></header>
      <div className="h-[214px] border border-[#3a3a3a] bg-[#4f4f4f]" />
      <div className="relative flex h-[28px] items-center justify-end gap-2 bg-[#4d4d4d] pr-[7px] text-[#8f8f8f]">
        <button aria-label="列表视图">{icons.list}</button>
        <button aria-label="删除">{icons.recycle}</button>
        <span className="absolute top-px left-[93px] h-1 w-3 border-y border-white bg-black" />
      </div>
      <div className="flex-1 border border-[#3a3a3a] bg-[#4f4f4f]" />
    </aside>
  );
}

/* ---------- Brand badge ---------- */

function Blossom() {
  return (
    <svg width="56" height="56" viewBox="-28 -28 56 56" aria-hidden="true" className="shrink-0">
      {[0, 72, 144, 216, 288].map((a) => (
        <g key={a} transform={`rotate(${a})`}>
          <path d="M0 0C-6 -5 -12 -13 -10 -20Q-8 -27 -3 -27L0 -24.500 3 -27Q8 -27 10 -20C12 -13 6 -5 0 0z" fill="#f58c8a" />
          <path d="M-10 -20Q-8 -27 -3 -27L-1.500 -25.700C-8 -23 -9 -14 -4.500 -5-9 -9 -11.500 -15 -10 -20z" fill="#e57876" />
        </g>
      ))}
      {[0, 72, 144, 216, 288].map((a) => (
        <g key={a} transform={`rotate(${a})`} stroke="#fdeaea" fill="#fdeaea">
          <path d="M0 0V-10" strokeWidth="1.4" />
          <path d="M0 0L-4 -7M0 0L4 -7" strokeWidth="0.6" />
          <circle cx="0" cy="-10.5" r="0.9" />
          <circle cx="-4" cy="-7.500" r="0.5" />
          <circle cx="4" cy="-7.500" r="0.5" />
        </g>
      ))}
    </svg>
  );
}

function Badge() {
  return (
    <div className="absolute right-0 bottom-0 flex h-[100px] w-[250px] items-center bg-white">
      <Blossom />
      <span className="ml-1 text-[35px] leading-10 font-medium whitespace-nowrap text-[#e27b7b] italic">小樱知识网</span>
      <span className="absolute right-7 bottom-4 text-2xl leading-8 text-white [-webkit-text-stroke:2px_#333] [paint-order:stroke_fill]">
        易坊好文馆
      </span>
    </div>
  );
}

export default function App() {
  return (
    <div className="relative flex min-h-screen flex-col bg-[#1c1c1c] font-['Liberation_Sans','Noto_Sans_CJK_SC',sans-serif]">
      <div className="flex">
        <Player />
        <Bin />
      </div>
      <main className="flex flex-1 gap-0.5 pt-px">
        <Timeline />
        <InfoPanel />
      </main>
      <Badge />
    </div>
  );
}
